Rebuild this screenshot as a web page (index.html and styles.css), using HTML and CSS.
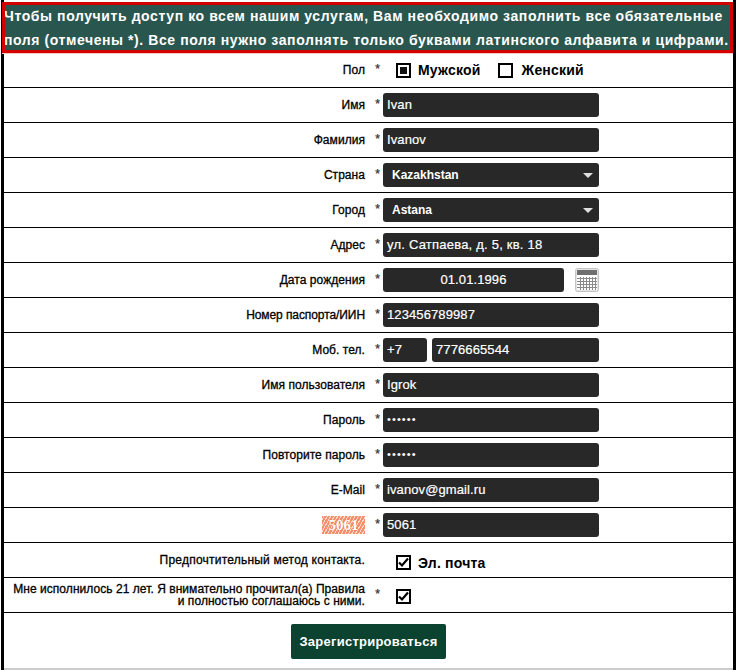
FILE: index.html
```html
<!DOCTYPE html>
<html lang="ru">
<head>
<meta charset="utf-8">
<title>Регистрация</title>
<link rel="stylesheet" href="styles.css">
</head>
<body>
<div class="page">
  <div class="notice"><div class="line-a">Чтобы получить доступ ко всем нашим услугам, Вам необходимо заполнить все обязательные</div><div class="line-b">поля (отмечены *). Все поля нужно заполнять только буквами латинского алфавита и цифрами.</div></div>
  <form class="form">
    <div class="row"><div class="label">Пол</div><div class="star">*</div><div class="field choices">
      <span class="box"><span class="dot"></span></span><span class="choice gap-a">Мужской</span>
      <span class="box box-far"></span><span class="choice">Женский</span>
    </div></div>
    <div class="row"><div class="label">Имя</div><div class="star">*</div><div class="field"><div class="input">Ivan</div></div></div>
    <div class="row"><div class="label">Фамилия</div><div class="star">*</div><div class="field"><div class="input">Ivanov</div></div></div>
    <div class="row"><div class="label">Страна</div><div class="star">*</div><div class="field"><div class="input select">Kazakhstan<span class="arrow"></span></div></div></div>
    <div class="row"><div class="label">Город</div><div class="star">*</div><div class="field"><div class="input select">Astana<span class="arrow"></span></div></div></div>
    <div class="row"><div class="label">Адрес</div><div class="star">*</div><div class="field"><div class="input address">ул. Сатпаева, д. 5, кв. 18</div></div></div>
    <div class="row"><div class="label">Дата рождения</div><div class="star">*</div><div class="field date">
      <div class="input date-input">01.01.1996</div>
      <svg class="cal" width="24" height="24" viewBox="0 0 24 24"><rect x="0.5" y="0.5" width="23" height="23" rx="2" fill="#e4e4e4" stroke="#c4c4c4"/><rect x="2" y="2" width="20" height="5" fill="#6f6f6f"/><rect x="2" y="7" width="20" height="15" fill="#fff"/><path d="M2 10.5H22M2 13.5H22M2 16.5H22M2 19.5H22M5.5 9V22M8.5 9V22M11.5 9V22M14.5 9V22M17.5 9V22M20.5 9V22" stroke="#8a8a8a" fill="none"/></svg>
    </div></div>
    <div class="row"><div class="label narrow">Номер паспорта/ИИН</div><div class="star">*</div><div class="field"><div class="input">123456789987</div></div></div>
    <div class="row"><div class="label">Моб. тел.</div><div class="star">*</div><div class="field phone"><div class="input code">+7</div><div class="input number">7776665544</div></div></div>
    <div class="row"><div class="label">Имя пользователя</div><div class="star">*</div><div class="field"><div class="input">Igrok</div></div></div>
    <div class="row"><div class="label">Пароль</div><div class="star">*</div><div class="field"><div class="input pass">••••••</div></div></div>
    <div class="row"><div class="label">Повторите пароль</div><div class="star">*</div><div class="field"><div class="input pass">••••••</div></div></div>
    <div class="row"><div class="label">E-Mail</div><div class="star">*</div><div class="field"><div class="input">ivanov@gmail.ru</div></div></div>
    <div class="row"><div class="label"><span class="captcha">5061</span></div><div class="star">*</div><div class="field"><div class="input">5061</div></div></div>
    <div class="row"><div class="label wide">Предпочтительный метод контакта.</div><div class="star"></div><div class="field choices low">
      <span class="box checked"><svg width="11" height="11" viewBox="0 0 11 11"><path d="M1 5.5L4 8.5L10 1.5" fill="none" stroke="#000" stroke-width="2.2"/></svg></span><span class="choice">Эл. почта</span>
    </div></div>
    <div class="row"><div class="label">Мне исполнилось 21 лет. Я внимательно прочитал(а) Правила<br>и полностью соглашаюсь с ними.</div><div class="star">*</div><div class="field choices lower">
      <span class="box checked"><svg width="11" height="11" viewBox="0 0 11 11"><path d="M1 5.5L4 8.5L10 1.5" fill="none" stroke="#000" stroke-width="2.2"/></svg></span>
    </div></div>
    <div class="submit-row"><button type="button" class="submit">Зарегистрироваться</button></div>
  </form>
</div>
</body>
</html>
```

FILE: styles.css
```css
* { box-sizing: border-box; }
html, body { margin: 0; padding: 0; background: #fff; }
body { width: 736px; height: 670px; overflow: hidden; font-family: "Liberation Sans", Arial, sans-serif; color: #000; }
.page { margin-left: 1px; width: 735px; height: 670px; padding-top: 2px; border-left: 3px solid #000; border-right: 3px solid #000; }
.notice {
  margin-left: -2px;
  width: 731px;
  height: 51px;
  border: 3px solid #d40000;
  background: #2a5650;
  box-shadow: 0 1px 0 #f4c6c6;
  color: #fff;
  font-size: 14px;
  font-weight: bold;
  line-height: 24px;
  white-space: nowrap;
  overflow: hidden;
}
.line-a { letter-spacing: 0.59px; margin: -1px 0 0 -1px; }
.line-b { letter-spacing: 0.58px; margin-left: -1px; }
.row { display: flex; height: 35px; border-bottom: 1px solid #000; align-items: center; }
.label { width: 361px; text-align: right; font-size: 12px; line-height: 12px; white-space: nowrap; letter-spacing: 0.05px; -webkit-text-stroke: 0.3px #000; }
.label.narrow { letter-spacing: -0.08px; }
.label.wide { letter-spacing: 0.22px; }
.star { width: 18px; height: 18px; text-align: right; padding-right: 3px; font-size: 12px; line-height: 16px; color: #333; -webkit-text-stroke: 0.25px #333; }
.field { display: flex; align-items: center; }
.input {
  width: 216px;
  height: 24px;
  background: #282828;
  border-radius: 3px;
  color: #fff;
  font-size: 13px;
  line-height: 23px;
  padding-left: 4px;
  letter-spacing: 0.1px;
  -webkit-text-stroke: 0.2px #fff;
}
.address { letter-spacing: 0.22px; }
.select { position: relative; padding-left: 9px; font-size: 12px; font-weight: bold; line-height: 24px; letter-spacing: 0; -webkit-text-stroke: 0; }
.arrow { position: absolute; right: 6px; top: 10px; border: 5px solid transparent; border-top-color: #e0e0e0; border-bottom: 0; }
.date { gap: 11px; }
.date-input { width: 181px; text-align: center; padding: 0; }
.phone { gap: 5px; }
.code { width: 44px; }
.number { width: 167px; }
.pass { font-size: 11px; letter-spacing: 1.1px; padding-left: 4px; -webkit-text-stroke: 0; }
.choices { font-size: 14px; font-weight: bold; }
.low { padding-top: 5px; }
.lower { padding-top: 2px; }
.box { width: 15px; height: 15px; border: 2px solid #000; background: #fff; display: flex; align-items: center; justify-content: center; margin-left: 13px; margin-right: 7px; }
.box-far { margin-right: 9px; }
.choice { letter-spacing: 0.2px; }
.gap-a { margin-right: 4px; }
.dot { width: 7px; height: 7px; background: #111; }
.captcha { display: inline-block; width: 43px; height: 18px; line-height: 18px; text-align: center; color: #fff; font-family: "Liberation Serif", serif; font-size: 15px; font-weight: bold; letter-spacing: 0; -webkit-text-stroke: 0; text-shadow: 0 0 1px #e2562c; background: repeating-linear-gradient(-60deg, #f78f6c 0 2px, #ffd9cb 2px 3px); vertical-align: middle; }
.submit-row { display: flex; justify-content: center; height: 57px; padding-top: 11px; border-bottom: 2px solid #ccc; }
.submit { width: 155px; height: 35px; background: #0c4230; color: #fff; border: 0; border-radius: 2px; font: bold 13px "Liberation Sans", Arial, sans-serif; letter-spacing: 0.25px; padding: 0; }
```
